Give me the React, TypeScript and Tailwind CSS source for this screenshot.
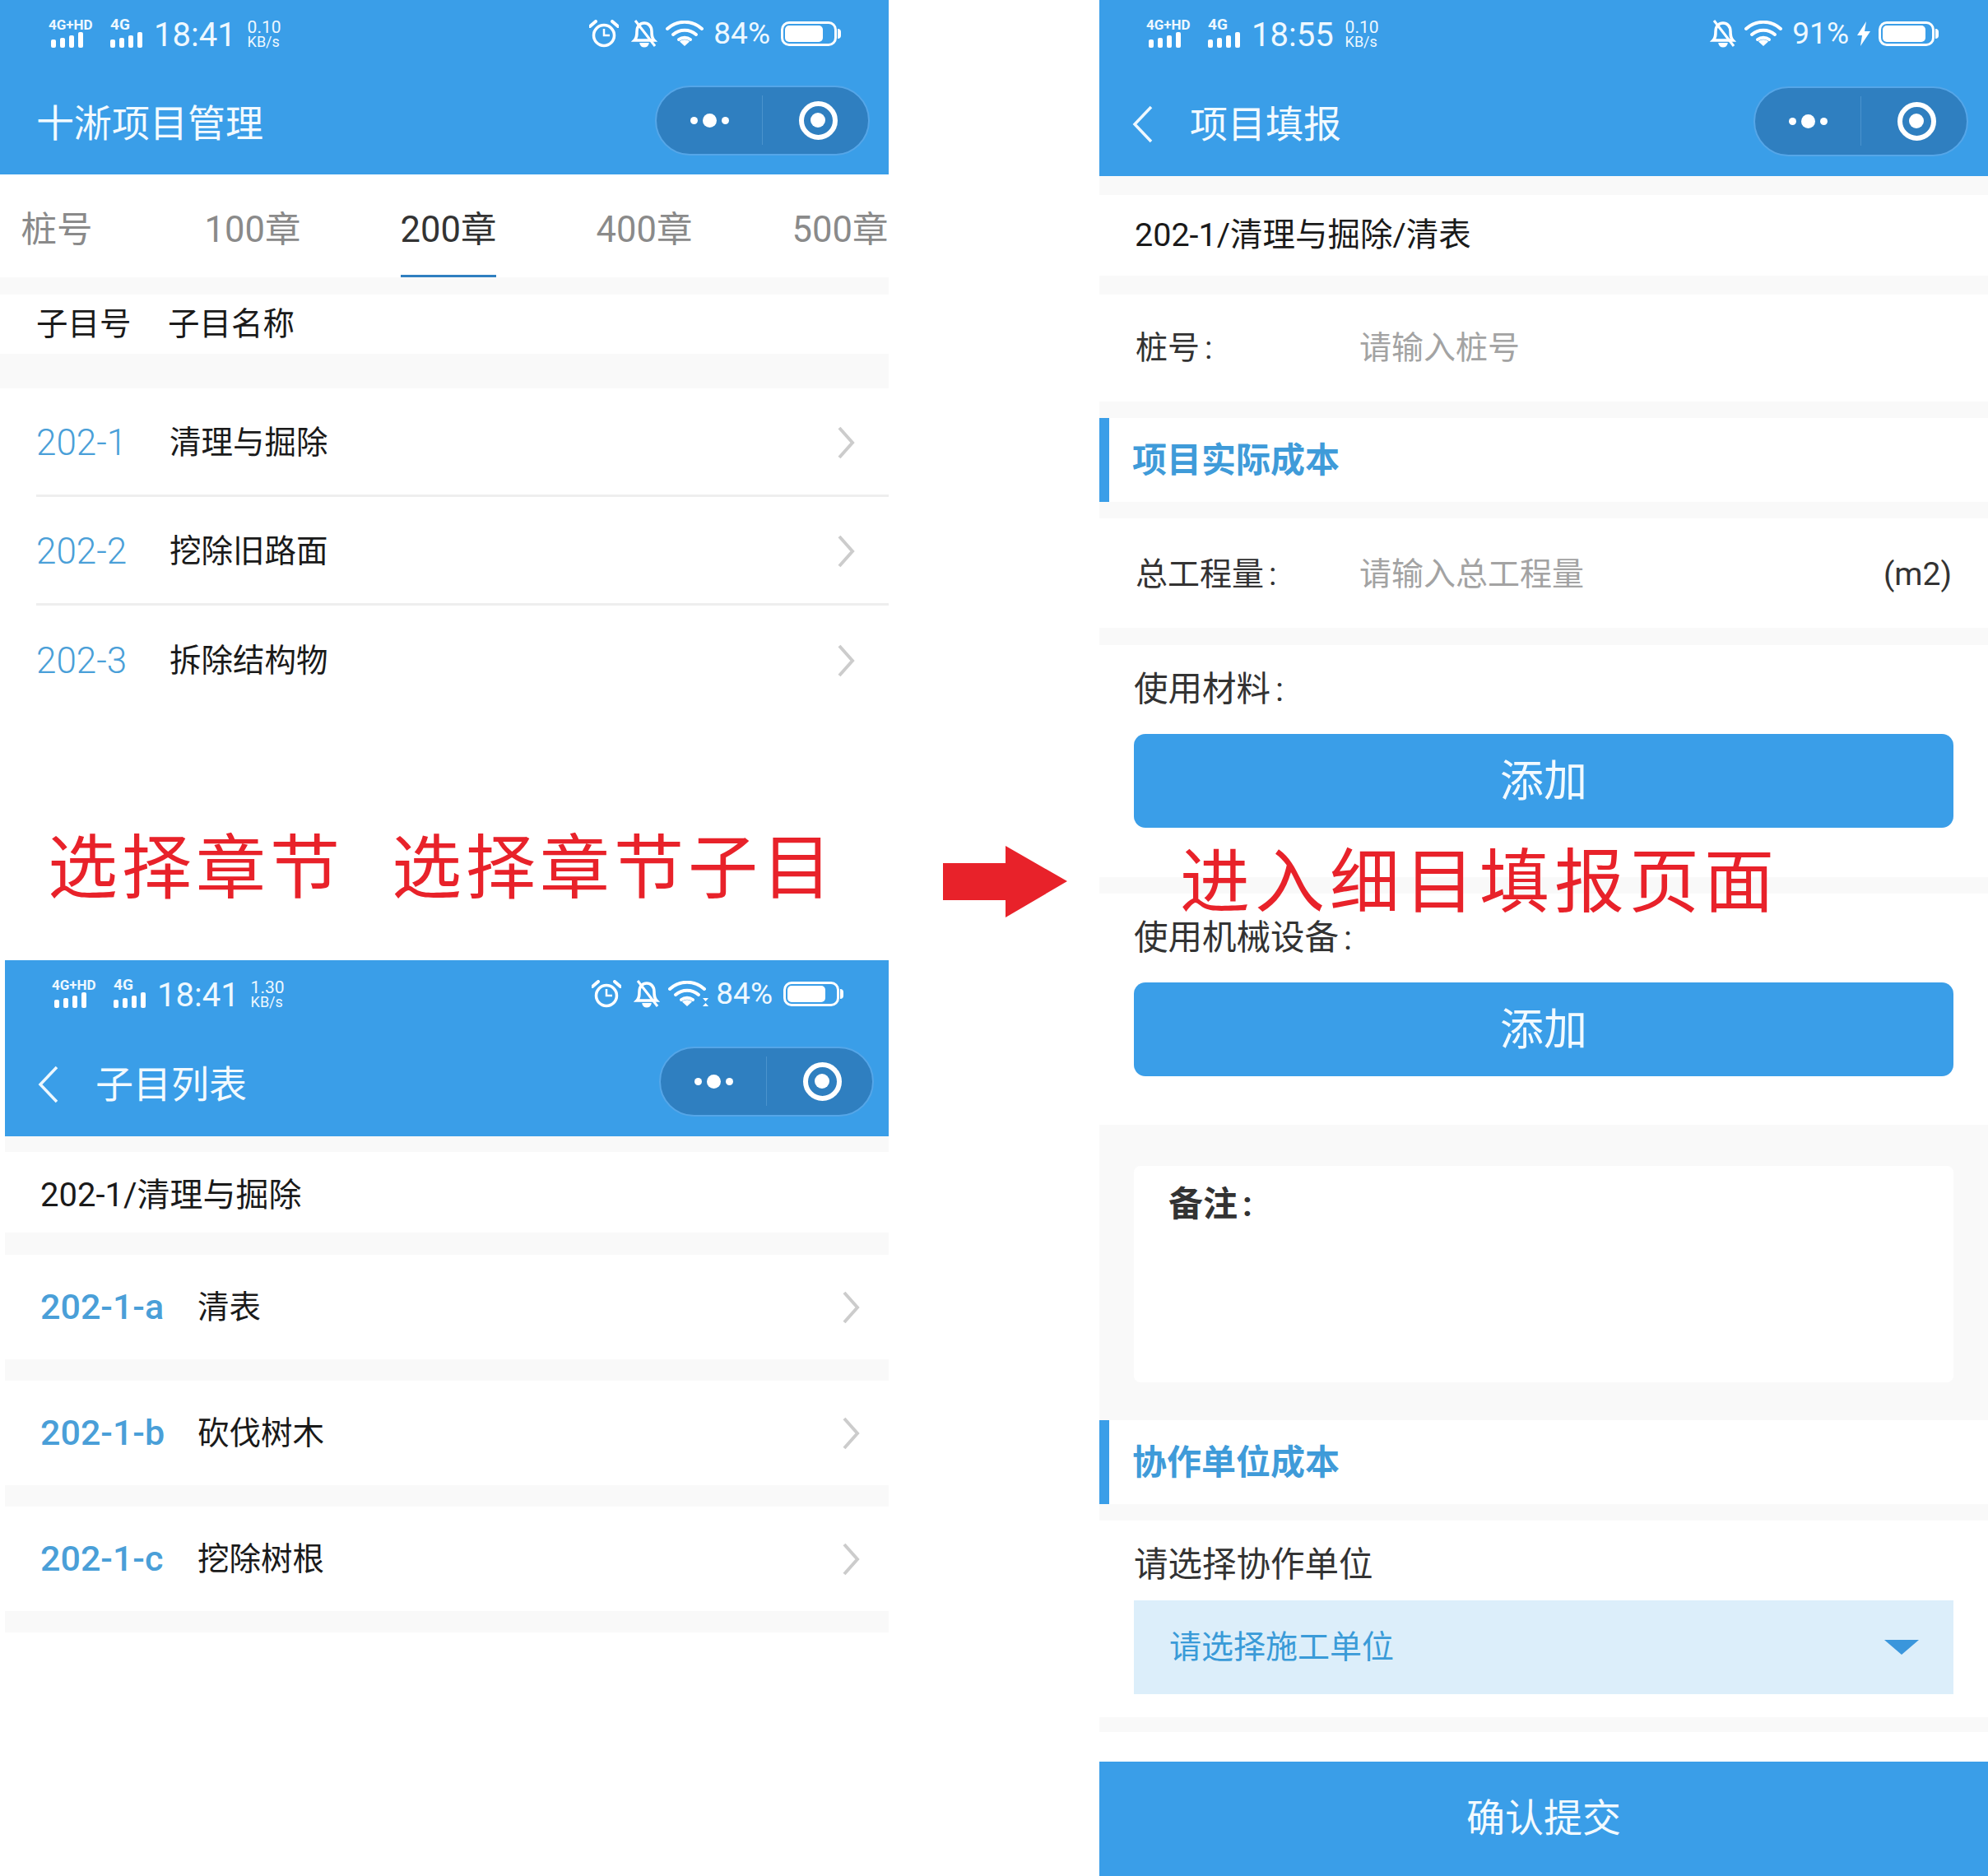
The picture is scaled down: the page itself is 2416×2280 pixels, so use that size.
import { ReactNode } from "react";

const chapters = ["桩号", "100章", "200章", "400章", "500章"];

const sections = [
  { code: "202-1", name: "清理与掘除" },
  { code: "202-2", name: "挖除旧路面" },
  { code: "202-3", name: "拆除结构物" },
];

const subItems = [
  { code: "202-1-a", name: "清表" },
  { code: "202-1-b", name: "砍伐树木" },
  { code: "202-1-c", name: "挖除树根" },
];

function Signal({ label, wide }: { label: string; wide?: boolean }) {
  return (
    <div className={wide ? "flex h-[38px] w-[72px] flex-col" : "flex h-[38px] w-[44px] flex-col"}>
      <span className={wide ? "h-[17px] text-[17px] leading-[16px] font-bold -ml-[3px] whitespace-nowrap" : "h-[17px] text-[19px] leading-[16px] font-bold whitespace-nowrap"}>{label}</span>
      <svg width="42" height="20" viewBox="0 0 42 20" fill="white">
        <rect x="0" y="9" width="6" height="10" rx="2" />
        <rect x="11" y="7" width="6" height="12" rx="2" />
        <rect x="22" y="4" width="6" height="15" rx="2" />
        <rect x="33" y="0" width="6" height="19" rx="2" />
      </svg>
    </div>
  );
}

function AlarmIcon() {
  return (
    <svg width="36" height="34" viewBox="0 0 36 34" fill="none" stroke="white" strokeWidth="3.5" className="mr-[15px]">
      <circle cx="18" cy="19" r="12.5" />
      <path d="M18 11v8h7" strokeWidth="2.5" />
      <path d="M1 8 8 2M35 8l-7-6" strokeWidth="4" strokeLinecap="round" />
    </svg>
  );
}

function MutedBell() {
  return (
    <svg width="32" height="34" viewBox="0 0 32 34" fill="none" stroke="white" strokeWidth="3.5" className="mr-[10px]">
      <path d="M4 25c3-3 3-6 3-11 0-6 4-10 9-10s9 4 9 10c0 5 0 8 3 11z" />
      <path d="M12 28c0 5 8 5 8 0" fill="white" />
      <path d="M5 1 29 32" strokeWidth="3" />
    </svg>
  );
}

function WifiIcon({ activity }: { activity?: boolean }) {
  return (
    <svg width={activity ? 51 : 46} height="32" viewBox={activity ? "0 0 51 32" : "0 0 46 32"} fill="none" stroke="white" strokeWidth="4" strokeLinecap="round" className={activity ? "mr-[7px]" : "mr-[12px]"}>
      <path d="M2 10C14-1 32-1 44 10" />
      <path d="M9 17c8-7 20-7 28 0" />
      <path d="M16 23c4-3 10-3 14 0" />
      <path d="M17 25.5 23 31l6-5.5c-3-3-9-3-12 0z" fill="white" stroke="none" />
      {activity && <path d="M42 21h7l-3.500 4zM42 31h7l-3.500-4z" fill="white" stroke="none" />}
    </svg>
  );
}

function Battery({ fill }: { fill: string }) {
  return (
    <div className="flex items-center">
      <div className="h-[30px] w-[68px] rounded-[10px] border-[3px] border-white p-[2px]">
        <div className={`h-full rounded-[5px] bg-white ${fill}`} />
      </div>
      <div className="ml-px h-[12px] w-[4px] rounded-r-full bg-white" />
    </div>
  );
}

function StatusBar(props: { time: string; speed: string; percent: string; alarm?: boolean; charging?: boolean; activity?: boolean; fill: string; className: string }) {
  return (
    <div className={`flex h-[80px] items-center justify-between pt-[2px] text-[#eef8ff] ${props.className}`}>
      <div className="flex items-center">
        <Signal label="4G+HD" wide />
        <Signal label="4G" />
        <span className="ml-[9px] mt-[3px] text-[40px] leading-[44px]">{props.time}</span>
        <div className="ml-[14px] flex flex-col">
          <span className="text-[21px] leading-[18px]">{props.speed}</span>
          <span className="text-[18px] leading-[17px]">KB/s</span>
        </div>
      </div>
      <div className="flex items-center">
        {props.alarm && <AlarmIcon />}
        <MutedBell />
        <WifiIcon activity={props.activity} />
        <span className="text-[37px] leading-[44px]">{props.percent}</span>
        {props.charging ? (
          <svg width="16" height="30" viewBox="0 0 16 30" fill="white" className="mx-[10px]">
            <path d="M11 0 0 17h6l-2 13L16 12H9z" />
          </svg>
        ) : (
          <span className="w-[13px]" />
        )}
        <Battery fill={props.fill} />
      </div>
    </div>
  );
}

function Capsule() {
  return (
    <div className="flex h-[85px] w-[261px] items-center rounded-full border-2 border-[#55a6e8] bg-[#2f7fc0]">
      <div className="flex w-[128px] items-center justify-center gap-[6px]">
        <span className="h-[9px] w-[9px] rounded-full bg-white" />
        <span className="h-[17px] w-[17px] rounded-full bg-white" />
        <span className="h-[9px] w-[9px] rounded-full bg-white" />
      </div>
      <div className="h-[60px] w-px bg-[#4b93cd]" />
      <div className="flex flex-1 justify-center pl-[6px]">
        <div className="flex h-[47px] w-[47px] items-center justify-center rounded-full border-[6px] border-white">
          <span className="h-[18px] w-[18px] rounded-full bg-white" />
        </div>
      </div>
    </div>
  );
}

function BackChevron() {
  return (
    <svg width="26" height="46" viewBox="0 0 26 46" fill="none" stroke="#eef8ff" strokeWidth="3.5" className="mr-[44px]">
      <path d="M23 2 3 23l20 21" />
    </svg>
  );
}

function NavBar({ title, back, className }: { title: string; back?: boolean; className: string }) {
  return (
    <div className={`flex flex-1 items-center justify-between ${className}`}>
      <div className="flex items-center pt-[8px]">
        {back && <BackChevron />}
        <span className="text-[46px] leading-[60px] text-[#f2faff]">{title}</span>
      </div>
      <Capsule />
    </div>
  );
}

function Strip({ className }: { className: string }) {
  return <div className={`bg-[#f9f9f9] ${className}`} />;
}

function RowChevron() {
  return (
    <svg width="22" height="40" viewBox="0 0 22 40" fill="none" stroke="#cccccc" strokeWidth="4">
      <path d="M3 2 19 20 3 38" />
    </svg>
  );
}

function ChapterScreen() {
  return (
    <div className="flex h-[868px] flex-col">
      <div className="flex h-[212px] flex-col bg-[#3a9ee8]">
        <StatusBar time="18:41" speed="0.10" percent="84%" alarm fill="w-[80%]" className="pl-[62px] pr-[58px]" />
        <NavBar title="十淅项目管理" className="pl-[44px] pr-[23px]" />
      </div>
      <div className="flex h-[125px] overflow-hidden -ml-[50px]">
        {chapters.map((c) => (
          <div key={c} className="flex w-[238px] shrink-0 justify-center">
            <div className={c === "200章" ? "flex h-full flex-col justify-between border-b-[3px] border-[#2f7fc0] pt-[40px]" : "pt-[40px]"}>
              <span className={c === "200章" ? "text-[43.5px] leading-[56px] text-[#333333]" : "text-[43.5px] leading-[56px] text-[#8a8a8a]"}>{c}</span>
            </div>
          </div>
        ))}
      </div>
      <Strip className="h-[21px]" />
      <div className="flex h-[72px] items-center pl-[44px] text-[38.5px] text-[#1a1a1a]">
        <span className="w-[160px]">子目号</span>
        <span>子目名称</span>
      </div>
      <Strip className="h-[42px]" />
      {sections.map((s, i) => (
        <div key={s.code} className="flex h-[132px] pl-[44px]">
          <div className={i < 2 ? "flex flex-1 items-center border-b-[3px] border-[#eeeeee] pr-[41px] pt-[2px]" : "flex flex-1 items-center pr-[41px] pt-[2px]"}>
            <span className="w-[162px] text-[44px] font-light text-[#4a9fd8]">{s.code}</span>
            <span className="flex-1 text-[38.5px] text-[#1a1a1a]">{s.name}</span>
            <RowChevron />
          </div>
        </div>
      ))}
    </div>
  );
}

function Caption() {
  return (
    <div className="flex h-[299px] pl-[58px] pt-[147px] text-[85px] leading-[82px] tracking-[5px] text-[#e8222a]">
      <span>选择章节</span>
      <span className="ml-[58px]">选择章节子目</span>
    </div>
  );
}

function SubItemScreen() {
  return (
    <div className="ml-[6px] flex flex-col">
      <div className="flex h-[214px] flex-col bg-[#3a9ee8]">
        <StatusBar time="18:41" speed="1.30" percent="84%" alarm activity fill="w-[80%]" className="pl-[60px] pr-[55px]" />
        <NavBar title="子目列表" back className="pl-[40px] pr-[18px]" />
      </div>
      <Strip className="h-[19px]" />
      <div className="flex h-[98px] items-center pl-[43px] pt-[8px] text-[40px] text-[#1a1a1a]">202-1/清理与掘除</div>
      <Strip className="h-[27px]" />
      {subItems.map((s) => (
        <div key={s.code}>
          <div className="flex h-[127px] items-center pl-[43px] pr-[35px]">
            <span className="w-[191px] text-[43px] font-medium text-[#4a9fd8]">{s.code}</span>
            <span className="flex-1 text-[38.5px] text-[#1a1a1a]">{s.name}</span>
            <RowChevron />
          </div>
          <Strip className="h-[26px]" />
        </div>
      ))}
    </div>
  );
}

function SectionTitle({ title }: { title: string }) {
  return (
    <div className="flex h-[102px] items-center border-l-[12px] border-[#3a9ee8] pl-[28px] text-[42px] font-bold text-[#3f9bd9]">{title}</div>
  );
}

function FormRow({ label, placeholder, unit, className }: { label: string; placeholder: string; unit?: string; className: string }) {
  return (
    <div className={`flex items-center pl-[44px] pr-[44px] text-[39px] ${className}`}>
      <span className="w-[272px] text-[#333333]">
        {label}
        <span className="ml-[6px]">:</span>
      </span>
      <span className="flex-1 text-[#a3a3a3]">{placeholder}</span>
      {unit && <span className="text-[39px] text-[#333333]">{unit}</span>}
    </div>
  );
}

function Block({ label, children, className }: { label: ReactNode; children: ReactNode; className: string }) {
  return (
    <div className={`flex flex-col px-[42px] ${className}`}>
      <div className="flex h-[108px] items-center text-[41.5px] text-[#333333]">{label}</div>
      {children}
    </div>
  );
}

function AddButton() {
  return (
    <div className="flex h-[114px] items-center justify-center rounded-[14px] bg-[#3a9ee8] pt-[3px] text-[53px] text-[#f2faff]">添加</div>
  );
}

function FillScreen() {
  return (
    <div className="relative flex w-[1080px] flex-col">
      <div className="flex h-[214px] flex-col bg-[#3a9ee8]">
        <StatusBar time="18:55" speed="0.10" percent="91%" charging fill="w-[90%]" className="pl-[60px] pr-[60px]" />
        <NavBar title="项目填报" back className="pl-[40px] pr-[24px]" />
      </div>
      <Strip className="h-[23px]" />
      <div className="flex h-[98px] items-center pl-[43px] text-[39.5px] text-[#1a1a1a]">202-1/清理与掘除/清表</div>
      <Strip className="h-[23px]" />
      <FormRow label="桩号" placeholder="请输入桩号" className="h-[130px]" />
      <Strip className="h-[20px]" />
      <SectionTitle title="项目实际成本" />
      <Strip className="h-[20px]" />
      <FormRow label="总工程量" placeholder="请输入总工程量" unit="(m2)" className="h-[133px] pt-[3px]" />
      <Strip className="h-[21px]" />
      <Block label={<>使用材料<span className="ml-[6px]">:</span></>} className="h-[282px]">
        <AddButton />
      </Block>
      <Strip className="h-[20px]" />
      <Block label={<>使用机械设备<span className="ml-[6px]">:</span></>} className="h-[281px]">
        <AddButton />
      </Block>
      <div className="h-[359px] bg-[#f9f9f9] px-[42px] pt-[50px]">
        <div className="h-[263px] rounded-[8px] bg-white pl-[42px] pt-[15px] text-[42px] font-bold text-[#333333]">
          备注<span className="ml-[6px]">:</span>
        </div>
      </div>
      <SectionTitle title="协作单位成本" />
      <Strip className="h-[20px]" />
      <Block label="请选择协作单位" className="h-[239px]">
        <div className="-mt-[11px] flex h-[114px] items-center justify-between bg-[#dceefa] pl-[43px] pr-[42px] text-[39px] text-[#3a9bd8]">
          请选择施工单位
          <svg width="42" height="18" viewBox="0 0 42 18" fill="#3a96dc">
            <path d="M0 0h42L21 18z" />
          </svg>
        </div>
      </Block>
      <Strip className="h-[18px]" />
      <div className="h-[36px]" />
      <div className="flex h-[139px] items-center justify-center bg-[#3a9ee8] text-[47px] text-[#f2faff]">确认提交</div>
      <div className="absolute left-[98px] top-[1028px] whitespace-nowrap text-[85px] leading-[90px] tracking-[6px] text-[#e8222a]">进入细目填报页面</div>
    </div>
  );
}

export default function App() {
  return (
    <div className="flex h-[2280px] w-[2416px] overflow-hidden bg-white font-['Roboto','Noto_Sans_CJK_SC',sans-serif]">
      <div className="flex w-[1080px] shrink-0 flex-col">
        <ChapterScreen />
        <Caption />
        <SubItemScreen />
      </div>
      <div className="w-[256px] shrink-0 pl-[66px] pt-[1028px]">
        <svg width="151" height="87" viewBox="0 0 151 87" fill="#e8222a">
          <path d="M0 21h76V0l75 43-75 44V66H0z" />
        </svg>
      </div>
      <FillScreen />
    </div>
  );
}
